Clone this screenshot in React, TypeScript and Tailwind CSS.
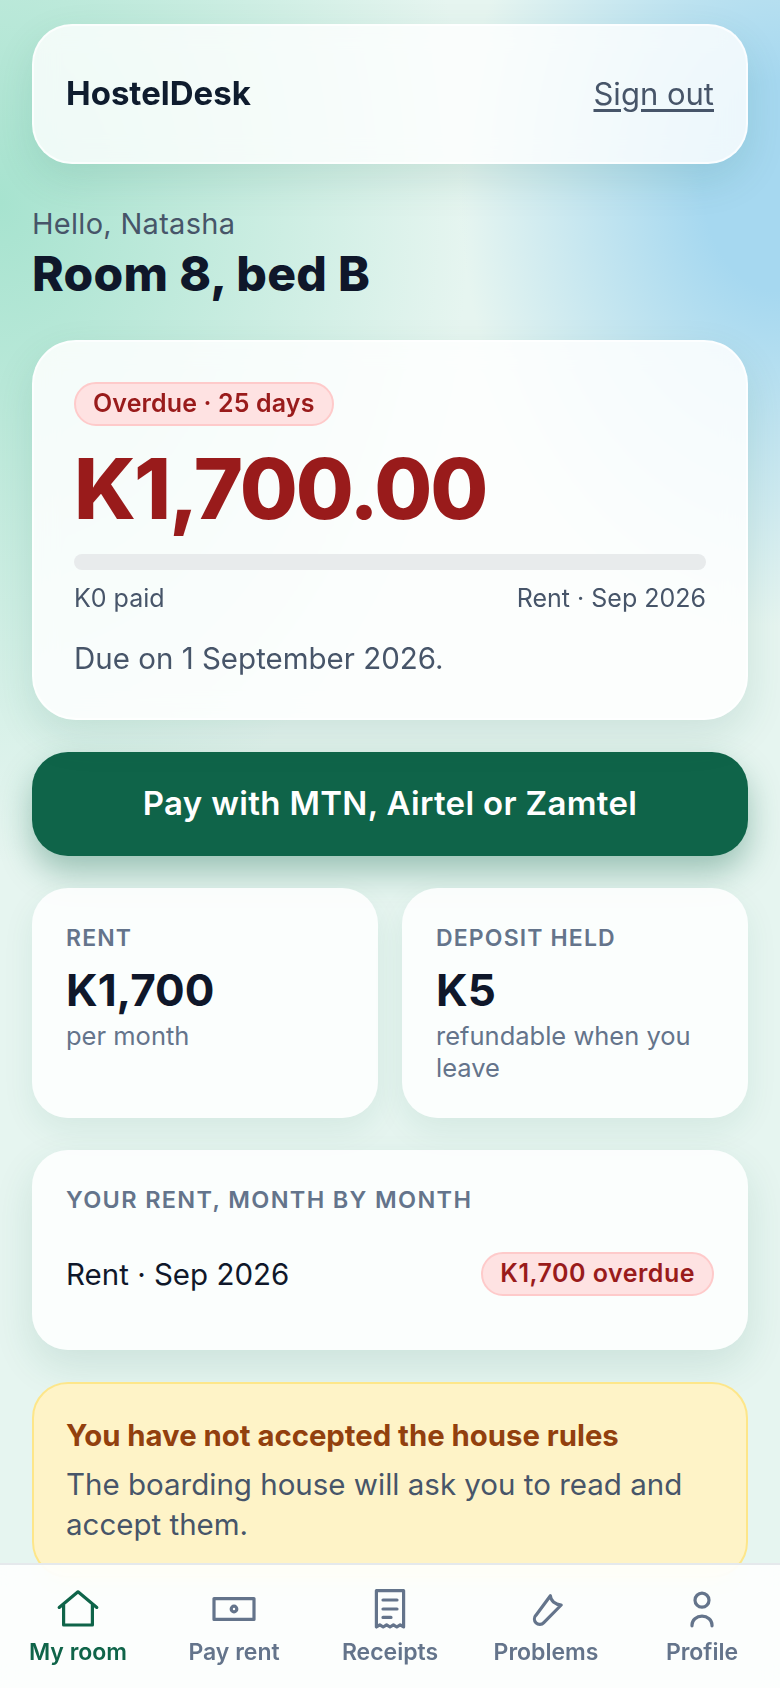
import type { ReactNode } from "react";

function HomeIcon() {
  return (
    <svg viewBox="0 0 24 24" className="h-12 w-12" fill="none" stroke="currentColor" strokeWidth={1.6} strokeLinecap="round" strokeLinejoin="round">
      <path d="M2.6 11.2 12 3.4l9.4 7.8" />
      <path d="M4.8 10v10h14.4V10" />
    </svg>
  );
}

function MoneyIcon() {
  return (
    <svg viewBox="0 0 24 24" className="h-12 w-12" fill="none" stroke="currentColor" strokeWidth={1.6} strokeLinecap="round" strokeLinejoin="round">
      <rect x="2" y="6.8" width="20" height="10.4" />
      <circle cx="12" cy="12" r="1.4" />
    </svg>
  );
}

function ReceiptIcon() {
  return (
    <svg viewBox="0 0 24 24" className="h-12 w-12" fill="none" stroke="currentColor" strokeWidth={1.6} strokeLinecap="round" strokeLinejoin="round">
      <path d="M5.2 2.8h13.6V21l-1.7-1.1-1.7 1.1-1.7-1.1-1.7 1.1-1.7-1.1-1.7 1.1-1.7-1.1L5.2 21z" />
      <path d="M8.5 7.5h7M8.5 12h7M8.5 16.2h4" />
    </svg>
  );
}

function ToolIcon() {
  return (
    <svg viewBox="0 0 24 24" className="h-12 w-12" fill="none" stroke="currentColor" strokeWidth={1.6} strokeLinecap="round" strokeLinejoin="round">
      <path d="M14.2 5.4c.1 2.4 2.2 4.3 5.4 4.6l-8.7 8.8a2.7 2.7 0 0 1-3.9.1 2.7 2.7 0 0 1 0-3.8z" />
    </svg>
  );
}

function PersonIcon() {
  return (
    <svg viewBox="0 0 24 24" className="h-12 w-12" fill="none" stroke="currentColor" strokeWidth={1.6} strokeLinecap="round" strokeLinejoin="round">
      <circle cx="12" cy="7.6" r="3.5" />
      <path d="M7 20.4v-.4a5 4.4 0 0 1 10 0v.4" />
    </svg>
  );
}

const navItems: { label: string; icon: ReactNode; active?: boolean }[] = [
  { label: "My room", icon: <HomeIcon />, active: true },
  { label: "Pay rent", icon: <MoneyIcon /> },
  { label: "Receipts", icon: <ReceiptIcon /> },
  { label: "Problems", icon: <ToolIcon /> },
  { label: "Profile", icon: <PersonIcon /> },
];

function Badge({ children, wide }: { children: ReactNode; wide?: boolean }) {
  return (
    <span
      className={`inline-flex h-[44px] items-center rounded-full border-2 border-[#fecaca] bg-[#fee2e2] px-[17px] text-[25px] font-semibold text-[#991b1b] ${
        wide ? "tracking-[0.02em]" : "tracking-[0.005em]"
      }`}
    >
      {children}
    </span>
  );
}

export default function App() {
  return (
    <div className="relative h-[1688px] overflow-hidden bg-[#e6f5f0] font-['Inter',sans-serif] bg-[radial-gradient(ellipse_470px_660px_at_0%_12%,#a7e3cf_0,transparent_100%),radial-gradient(ellipse_320px_440px_at_100%_11%,#a6d8f0_24%,transparent_100%)]">
      <main className="flex flex-col px-8 pt-6">
        {/* top bar */}
        <header className="flex h-[140px] items-center justify-between rounded-[40px] border-2 border-white/70 bg-white/80 px-[32px] shadow-[0_16px_40px_rgba(15,100,73,0.12)] backdrop-blur-md">
          <span className="text-[33px] font-bold text-[#0f1c2e]">HostelDesk</span>
          <span className="text-[31px] text-[#475569] underline underline-offset-4">Sign out</span>
        </header>

        <p className="mt-[42px] text-[29px] leading-[36px] tracking-[0.01em] text-[#475569]">Hello, Natasha</p>
        <h1 className="mt-[2px] text-[48px] leading-[60px] font-extrabold tracking-[0.006em] text-[#0f172a]">Room 8, bed B</h1>

        {/* balance */}
        <section className="mt-[36px] rounded-[44px] border-2 border-white/70 bg-white/85 px-[40px] pt-[40px] pb-[40px] shadow-[0_16px_40px_rgba(15,100,73,0.12)] backdrop-blur-md">
          <Badge>Overdue · 25 days</Badge>
          <div className="mt-[10px] text-[84px] leading-[106px] font-extrabold tracking-[-0.025em] text-[#991b1b]">K1,700.00</div>
          <div className="mt-[12px] h-4 rounded-full bg-[#e8ebec]" />
          <div className="mt-[12px] flex justify-between text-[25px] leading-[32px] text-[#475569]">
            <span>K0 paid</span>
            <span>Rent · Sep 2026</span>
          </div>
          <p className="mt-[24px] text-[29.5px] leading-[40px] text-[#475569]">Due on 1 September 2026.</p>
        </section>

        <button className="mt-[32px] h-[104px] rounded-[36px] bg-[#0f6449] text-[33px] font-semibold tracking-[0.01em] text-white shadow-[0_16px_32px_rgba(15,100,73,0.35)]">
          Pay with MTN, Airtel or Zamtel
        </button>

        <div className="mt-[32px] grid grid-cols-2 gap-6">
          <div className="h-[230px] rounded-[36px] bg-white/85 px-[34px] pt-[36px] shadow-[0_12px_32px_rgba(15,100,73,0.08)]">
            <div className="text-[23px] leading-[28px] font-semibold tracking-[0.05em] text-[#64748b]">RENT</div>
            <div className="mt-[10px] text-[44px] leading-[56px] font-bold text-[#0f172a]">K1,700</div>
            <div className="mt-[2px] text-[25.5px] leading-[32px] text-[#64748b]">per month</div>
          </div>
          <div className="h-[230px] rounded-[36px] bg-white/85 px-[34px] pt-[36px] shadow-[0_12px_32px_rgba(15,100,73,0.08)]">
            <div className="text-[23px] leading-[28px] font-semibold tracking-[0.05em] text-[#64748b]">DEPOSIT HELD</div>
            <div className="mt-[10px] text-[44px] leading-[56px] font-bold text-[#0f172a]">K5</div>
            <div className="mt-[2px] text-[25.5px] leading-[32px] text-[#64748b]">refundable when you leave</div>
          </div>
        </div>

        <section className="mt-[32px] h-[200px] rounded-[36px] bg-white/85 px-[34px] pt-[36px] shadow-[0_16px_40px_rgba(15,100,73,0.12)]">
          <div className="text-[23.5px] leading-[28px] font-semibold tracking-[0.057em] text-[#64748b]">YOUR RENT, MONTH BY MONTH</div>
          <div className="mt-[38px] flex items-center justify-between">
            <span className="text-[29.5px] text-[#0f172a]">Rent · Sep 2026</span>
            <Badge wide>K1,700 overdue</Badge>
          </div>
        </section>

        <section className="mt-[32px] rounded-[36px] border-2 border-[#fde68a] bg-[#fef3c7] px-[32px] pt-[32px] pb-[32px]">
          <div className="text-[29.3px] leading-[40px] font-bold text-[#92400e]">You have not accepted the house rules</div>
          <p className="mt-[8px] text-[29.5px] leading-[40px] text-[#475569]">The boarding house will ask you to read and accept them.</p>
        </section>
      </main>

      <nav className="fixed inset-x-0 bottom-0 flex h-[125px] border-t-2 border-[#e5e9ec] bg-white/85 backdrop-blur-md">
        {navItems.map((item) => (
          <div
            key={item.label}
            className={`flex flex-1 flex-col items-center pt-[20px] ${item.active ? "text-[#0f6449]" : "text-[#64748b]"}`}
          >
            {item.icon}
            <span className="mt-[3px] text-[23px] leading-[32px] font-semibold">{item.label}</span>
          </div>
        ))}
      </nav>
    </div>
  );
}
